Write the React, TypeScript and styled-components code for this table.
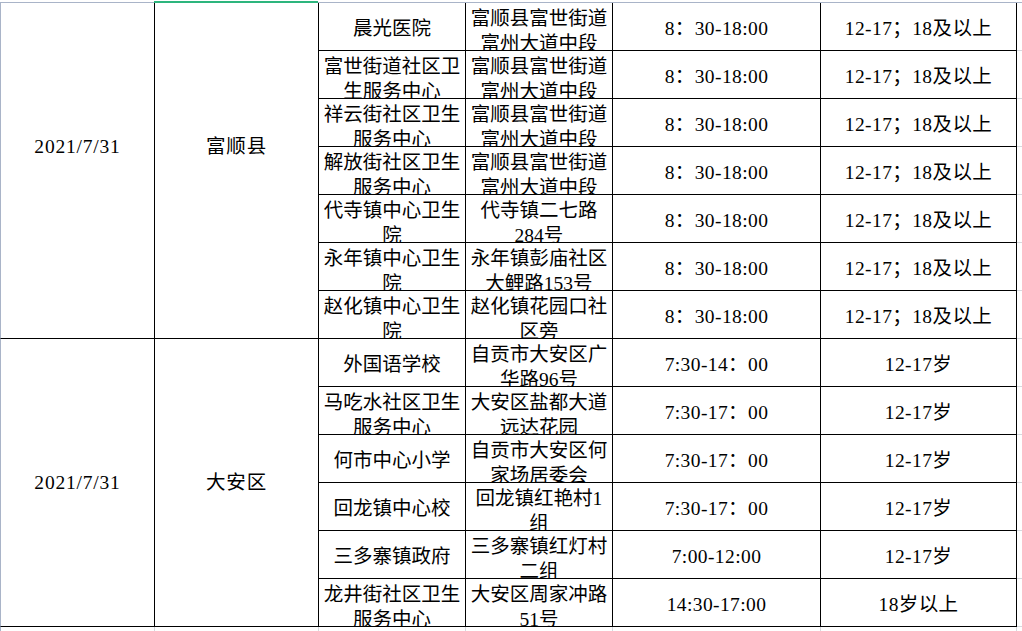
import { Fragment } from "react";
import styled, { createGlobalStyle } from "styled-components";

type Site = {
  name: string[];
  address: string[];
  hours: string;
  ages: string;
};

type Group = {
  date: string;
  district: string;
  hiddenRows: number;
  sites: Site[];
};

const FUSHUN_ADDR = ["富顺县富世街道", "富州大道中段"];
const FUSHUN_HOURS = "8：30-18:00";
const FUSHUN_AGES = "12-17；18及以上";

const groups: Group[] = [
  {
    date: "2021/7/31",
    district: "富顺县",
    hiddenRows: 1,
    sites: [
      { name: ["晨光医院"], address: FUSHUN_ADDR, hours: FUSHUN_HOURS, ages: FUSHUN_AGES },
      { name: ["富世街道社区卫", "生服务中心"], address: FUSHUN_ADDR, hours: FUSHUN_HOURS, ages: FUSHUN_AGES },
      { name: ["祥云街社区卫生", "服务中心"], address: FUSHUN_ADDR, hours: FUSHUN_HOURS, ages: FUSHUN_AGES },
      { name: ["解放街社区卫生", "服务中心"], address: FUSHUN_ADDR, hours: FUSHUN_HOURS, ages: FUSHUN_AGES },
      { name: ["代寺镇中心卫生", "院"], address: ["代寺镇二七路", "284号"], hours: FUSHUN_HOURS, ages: FUSHUN_AGES },
      { name: ["永年镇中心卫生", "院"], address: ["永年镇彭庙社区", "大鲤路153号"], hours: FUSHUN_HOURS, ages: FUSHUN_AGES },
      { name: ["赵化镇中心卫生", "院"], address: ["赵化镇花园口社", "区旁"], hours: FUSHUN_HOURS, ages: FUSHUN_AGES },
    ],
  },
  {
    date: "2021/7/31",
    district: "大安区",
    hiddenRows: 0,
    sites: [
      { name: ["外国语学校"], address: ["自贡市大安区广", "华路96号"], hours: "7:30-14：00", ages: "12-17岁" },
      { name: ["马吃水社区卫生", "服务中心"], address: ["大安区盐都大道", "远达花园"], hours: "7:30-17：00", ages: "12-17岁" },
      { name: ["何市中心小学"], address: ["自贡市大安区何", "家场居委会"], hours: "7:30-17：00", ages: "12-17岁" },
      { name: ["回龙镇中心校"], address: ["回龙镇红艳村1", "组"], hours: "7:30-17：00", ages: "12-17岁" },
      { name: ["三多寨镇政府"], address: ["三多寨镇红灯村", "二组"], hours: "7:00-12:00", ages: "12-17岁" },
      { name: ["龙井街社区卫生", "服务中心"], address: ["大安区周家冲路", "51号"], hours: "14:30-17:00", ages: "18岁以上" },
    ],
  },
];

const GlobalStyle = createGlobalStyle`
  *, *::before, *::after { box-sizing: border-box; }
  html, body { margin: 0; padding: 0; background: #fff; overflow: hidden; }
  body {
    font-family: "Liberation Serif", "Noto Sans CJK SC", serif;
    font-size: 19.5px;
    color: #000;
  }
`;

function Lines({ lines }: { lines: string[] }) {
  return (
    <span>
      {lines.map((line, i) => (
        <Fragment key={i}>
          {i > 0 && <br />}
          {line}
        </Fragment>
      ))}
    </span>
  );
}

export default function App() {
  return (
    <>
      <GlobalStyle />
      <StyledSheet>
        <StyledHeaderEdge>
          <StyledEdgeSegment $width={154} />
          <StyledActiveSegment $width={164} />
          <StyledEdgeSegment />
        </StyledHeaderEdge>
        <StyledViewport>
          <StyledTable>
            {groups.map((group, g) => (
              <Fragment key={g}>
                <StyledMergedCell $span={group.sites.length + group.hiddenRows} $first>
                  {group.date}
                </StyledMergedCell>
                <StyledMergedCell $span={group.sites.length + group.hiddenRows}>
                  {group.district}
                </StyledMergedCell>
                {Array.from({ length: group.hiddenRows * 4 }).map((_, i) => (
                  <StyledCell key={`h${i}`} />
                ))}
                {group.sites.map((site, i) => (
                  <Fragment key={i}>
                    <StyledCell $wrapped={site.name.length > 1}>
                      <Lines lines={site.name} />
                    </StyledCell>
                    <StyledCell $wrapped={site.address.length > 1}>
                      <Lines lines={site.address} />
                    </StyledCell>
                    <StyledCell $numeric>{site.hours}</StyledCell>
                    <StyledCell $numeric>{site.ages}</StyledCell>
                  </Fragment>
                ))}
              </Fragment>
            ))}
            {Array.from({ length: 6 }).map((_, i) => (
              <StyledGhostCell key={`g${i}`} $first={i === 0} />
            ))}
          </StyledTable>
        </StyledViewport>
      </StyledSheet>
    </>
  );
}

const StyledSheet = styled.div`
  width: 1022px;
  height: 631px;
  display: flex;
  flex-direction: column;
  overflow: hidden;
  background: #fff;
`;

const StyledHeaderEdge = styled.div`
  display: flex;
  height: 3px;
  flex-shrink: 0;
`;

const StyledEdgeSegment = styled.div<{ $width?: number }>`
  width: ${({ $width }) => ($width ? `${$width}px` : "auto")};
  flex: ${({ $width }) => ($width ? "none" : "1")};
  border-bottom: 1px solid #a9b4c8;
`;

const StyledActiveSegment = styled.div<{ $width: number }>`
  width: ${({ $width }) => $width}px;
  border-bottom: 2px solid #2db57d;
`;

const StyledViewport = styled.div`
  flex: 1;
  overflow: hidden;
  background: repeating-linear-gradient(
    to bottom,
    transparent 0 47px,
    #d6d9de 47px 48px
  );
`;

const StyledTable = styled.div`
  display: grid;
  grid-template-columns: 155px 164px 147px 147px 208px 196px;
  grid-auto-rows: 48px;
  margin-top: -48px;
  line-height: 24.5px;
`;

const StyledCell = styled.div<{ $wrapped?: boolean; $numeric?: boolean }>`
  display: flex;
  justify-content: center;
  align-items: ${({ $wrapped }) => ($wrapped ? "flex-start" : "center")};
  padding-top: ${({ $wrapped }) => ($wrapped ? "4px" : "5px")};
  border-right: 1px solid #000;
  border-bottom: 1px solid #000;
  background: #fff;
  text-align: center;
  white-space: nowrap;
  overflow: hidden;
  letter-spacing: ${({ $numeric }) => ($numeric ? "0.4px" : "0")};
`;

const StyledMergedCell = styled.div<{ $span: number; $first?: boolean }>`
  grid-row: span ${({ $span }) => $span};
  display: flex;
  align-items: center;
  justify-content: center;
  padding-top: 2px;
  border-left: ${({ $first }) => ($first ? "1px solid #a9b4c8" : "none")};
  border-right: 1px solid #000;
  border-bottom: 1px solid #000;
  background: #fff;
  letter-spacing: 0.8px;
`;

const StyledGhostCell = styled.div<{ $first?: boolean }>`
  border-left: ${({ $first }) => ($first ? "1px solid #a9b4c8" : "none")};
  border-right: 1px solid #d6d9de;
  background: #fff;
`;
